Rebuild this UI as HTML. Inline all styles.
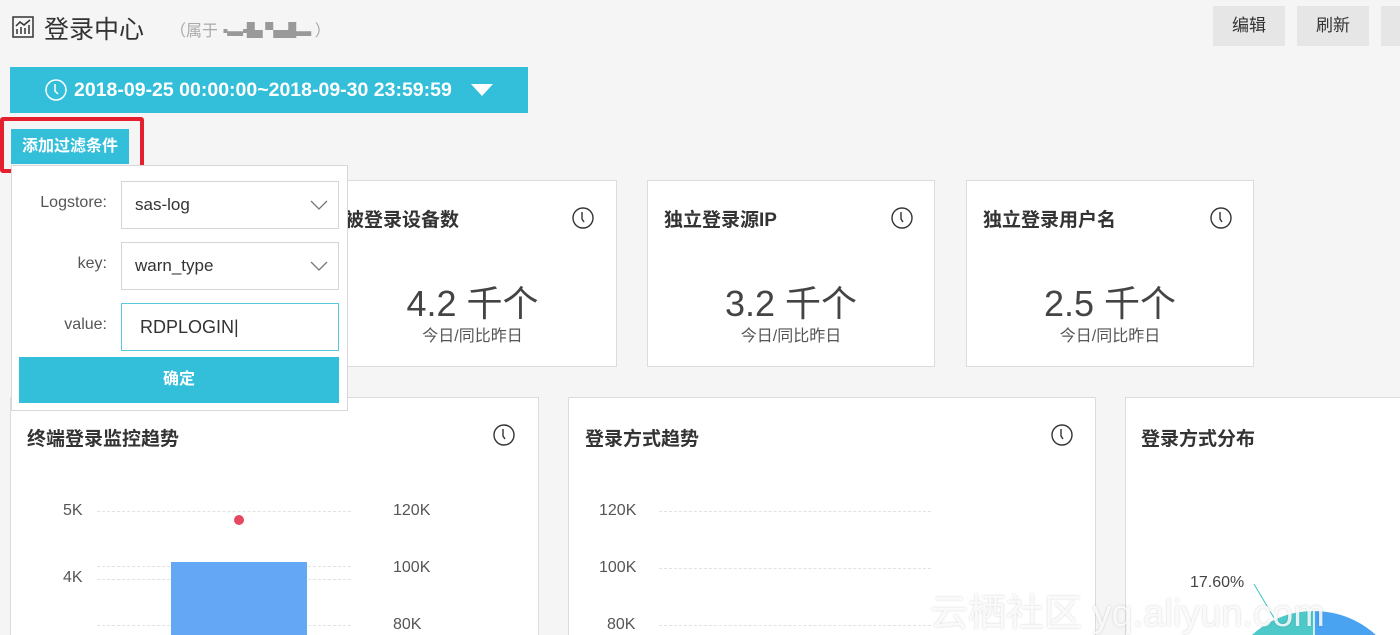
<!DOCTYPE html>
<html><head><meta charset="utf-8"><style>
*{box-sizing:border-box;margin:0;padding:0}
html,body{width:1400px;height:635px;overflow:hidden}
body{background:#f5f5f5;font-family:"Liberation Sans","Noto Sans CJK SC",sans-serif;color:#333;position:relative}
.a{position:absolute}
.card{position:absolute;background:#fff;border:1px solid #dcdcdc;overflow:hidden}
.btn{position:absolute;top:6px;height:40px;background:#e6e6e6;font-size:17px;line-height:40px;text-align:center;color:#333}
.ct{position:absolute;font-size:19px;font-weight:bold;color:#333}
.big{position:absolute;font-size:36px;color:#444;width:100%;text-align:center}
.sub{position:absolute;font-size:16px;color:#555;width:100%;text-align:center}
.lbl{position:absolute;font-size:16px;color:#555}
.grid{position:absolute;border-top:1px dashed #e2e2e2;height:0}
.sel{position:absolute;left:120px;width:218px;height:48px;border:1px solid #d5d5d5;background:#fff;font-size:17px;line-height:46px;padding-left:13px}
.fl{position:absolute;font-size:16px;color:#555;text-align:right;width:95px;left:10px}
</style></head><body>
<svg class="a" style="left:12px;top:16px" width="22" height="22" viewBox="0 0 22 22" fill="none" stroke="#333" stroke-width="1.5"><rect x="1" y="1" width="20" height="20"/><path d="M4 10l4-4 4 3 6-5M5 18v-5M9 18v-7M13 18v-6M17 18v-9"/></svg>
<div class="a" style="left:44px;top:10px;font-size:25px;color:#333">登录中心</div>
<div class="a" style="left:170px;top:17px;font-size:16px;color:#aaa">（属于 <span style="color:#999;letter-spacing:-1px">▪▬▪▙ ▚▟▬</span> ）</div>
<div class="btn" style="left:1213px;width:72px">编辑</div>
<div class="btn" style="left:1297px;width:72px">刷新</div>
<div class="btn" style="left:1381px;width:30px"></div>
<div class="a" style="left:10px;top:67px;width:518px;height:46px;background:#33bed9;color:#fff;font-size:19.5px;font-weight:bold;line-height:46px">
<svg style="position:absolute;left:34px;top:11px" width="24" height="24" viewBox="0 0 24 24" fill="none" stroke="#fff" stroke-width="1.5"><circle cx="12" cy="12" r="10"/><path d="M11 6v7l3 3"/></svg>
<span style="position:absolute;left:64px;top:0">2018-09-25 00:00:00~2018-09-30 23:59:59</span>
<svg style="position:absolute;left:461px;top:17px" width="22" height="12"><path d="M0 0h22L11 12z" fill="#fff"/></svg></div>
<div class="a" style="left:0;top:117px;width:144px;height:56px;border:4px solid #e5202e;border-radius:3px"></div>
<div class="a" style="left:11px;top:129px;width:118px;height:35px;background:#33bed9;color:#fff;font-size:16px;font-weight:bold;line-height:35px;text-align:center">添加过滤条件</div>

<div class="card" style="left:328px;top:180px;width:289px;height:187px">
<div class="ct" style="left:16px;top:24px">被登录设备数</div>
<svg class="a" style="left:242px;top:25px" width="24" height="24" viewBox="0 0 24 24" fill="none" stroke="#333" stroke-width="1.4"><circle cx="12" cy="12" r="10"/><path d="M11 6v7l2 3"/></svg>
<div class="big" style="top:94px">4.2 千个</div><div class="sub" style="top:141px">今日/同比昨日</div></div>
<div class="card" style="left:647px;top:180px;width:288px;height:187px">
<div class="ct" style="left:16px;top:24px">独立登录源IP</div>
<svg class="a" style="left:242px;top:25px" width="24" height="24" viewBox="0 0 24 24" fill="none" stroke="#333" stroke-width="1.4"><circle cx="12" cy="12" r="10"/><path d="M11 6v7l2 3"/></svg>
<div class="big" style="top:94px">3.2 千个</div><div class="sub" style="top:141px">今日/同比昨日</div></div>
<div class="card" style="left:966px;top:180px;width:288px;height:187px">
<div class="ct" style="left:16px;top:24px">独立登录用户名</div>
<svg class="a" style="left:242px;top:25px" width="24" height="24" viewBox="0 0 24 24" fill="none" stroke="#333" stroke-width="1.4"><circle cx="12" cy="12" r="10"/><path d="M11 6v7l2 3"/></svg>
<div class="big" style="top:94px">2.5 千个</div><div class="sub" style="top:141px">今日/同比昨日</div></div>

<div class="card" style="left:10px;top:397px;width:529px;height:250px">
<div class="ct" style="left:16px;top:26px">终端登录监控趋势</div>
<svg class="a" style="left:481px;top:25px" width="24" height="24" viewBox="0 0 24 24" fill="none" stroke="#333" stroke-width="1.4"><circle cx="12" cy="12" r="10"/><path d="M11 6v7l2 3"/></svg>
<div class="grid" style="left:86px;top:113px;width:254px"></div>
<div class="grid" style="left:86px;top:168px;width:254px"></div>
<div class="grid" style="left:86px;top:181px;width:254px"></div>
<div class="grid" style="left:86px;top:227px;width:254px"></div>
<div class="lbl" style="left:52px;top:104px">5K</div><div class="lbl" style="left:52px;top:171px">4K</div>
<div class="lbl" style="left:382px;top:104px">120K</div><div class="lbl" style="left:382px;top:161px">100K</div><div class="lbl" style="left:382px;top:218px">80K</div>
<div class="a" style="left:160px;top:164px;width:136px;height:90px;background:#64a7f5"></div>
<div class="a" style="left:223px;top:117px;width:10px;height:10px;border-radius:50%;background:#e5485f"></div>
</div>
<div class="card" style="left:568px;top:397px;width:528px;height:250px">
<div class="ct" style="left:16px;top:26px">登录方式趋势</div>
<svg class="a" style="left:481px;top:25px" width="24" height="24" viewBox="0 0 24 24" fill="none" stroke="#333" stroke-width="1.4"><circle cx="12" cy="12" r="10"/><path d="M11 6v7l2 3"/></svg>
<div class="grid" style="left:90px;top:113px;width:272px"></div>
<div class="grid" style="left:90px;top:170px;width:272px"></div>
<div class="grid" style="left:90px;top:227px;width:272px"></div>
<div class="lbl" style="left:30px;top:104px">120K</div><div class="lbl" style="left:30px;top:161px">100K</div><div class="lbl" style="left:38px;top:218px">80K</div>
</div>
<div class="card" style="left:1125px;top:397px;width:300px;height:250px">
<div class="ct" style="left:15px;top:26px">登录方式分布</div>
<div class="lbl" style="left:64px;top:176px;color:#444">17.60%</div>
<svg class="a" style="left:120px;top:180px" width="180" height="80"><path d="M8 6l20 34" stroke="#3fc4c4" fill="none"/><circle cx="68" cy="125" r="92" fill="#4aa3f0"/><path d="M-24 125A92 92 0 0 1 68 33V125z" fill="#4ec9c9"/><path d="M68 33v50" stroke="#fff" stroke-width="1.5"/></svg>
</div>

<div class="a" style="left:11px;top:165px;width:337px;height:246px;background:#fff;border:1px solid #d8d8d8">
<div class="fl" style="top:28px;left:0">Logstore:</div>
<div class="sel" style="top:15px;left:109px">sas-log<svg style="position:absolute;right:10px;top:18px" width="18" height="10" fill="none" stroke="#777" stroke-width="1.3"><path d="M1 1l8 8 8-8"/></svg></div>
<div class="fl" style="top:89px;left:0">key:</div>
<div class="sel" style="top:76px;left:109px">warn_type<svg style="position:absolute;right:10px;top:18px" width="18" height="10" fill="none" stroke="#777" stroke-width="1.3"><path d="M1 1l8 8 8-8"/></svg></div>
<div class="fl" style="top:150px;left:0">value:</div>
<div class="sel" style="top:137px;left:109px;border:1px solid #5cc8de;padding-left:18px;font-size:18px">RDPLOGIN<span style="font-weight:100">|</span></div>
<div class="a" style="left:7px;top:191px;width:320px;height:46px;background:#33bed9;color:#fff;font-weight:bold;font-size:16px;line-height:46px;text-align:center">确定</div>
</div>
<div class="a" style="left:930px;top:582px;font-size:38px;color:rgba(255,255,255,0.85);text-shadow:0 0 2px rgba(0,0,0,0.18);white-space:nowrap">云栖社区 yq.aliyun.com</div>
</body></html>
